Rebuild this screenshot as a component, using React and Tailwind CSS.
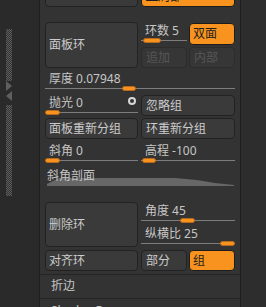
const font = "font-['Noto_Sans','Noto_Sans_CJK_SC',sans-serif]";

function Btn({ children, tone = "normal", className = "" }) {
  const tones = {
    normal: "border-[#222] bg-[#3a3a3a] text-[#cccccc]",
    orange: "border-[#1c1c1c] bg-[#f7931e] text-[#1e1e1e]",
    off: "border-[#2c2c2c] bg-[#363636] text-[#575757]",
  };
  return (
    <div
      className={`flex items-center whitespace-nowrap rounded-[4px] border pl-[3px] text-[12px] leading-[14px] ${tones[tone]} ${className}`}
    >
      {children}
    </div>
  );
}

function Slider({ label, thumb, w = 14, className = "", children }) {
  return (
    <div className={`flex flex-col ${className}`}>
      <div className="flex h-[14px] items-start pl-[4px] text-[12px] leading-[14px] whitespace-nowrap text-[#c6c6c6]">
        <span>{label}</span>
        {children}
      </div>
      <div className="relative h-[5px]">
        <div className="absolute left-0 right-0 top-[2px] h-px bg-[#7d7d7d]" />
        <div
          className="absolute top-0 h-[5px] rounded-full border border-[#b8691a] bg-[#f7931e]"
          style={{ left: thumb, width: w }}
        />
      </div>
    </div>
  );
}

const checker =
  "w-[6px] bg-[repeating-conic-gradient(#5c5c5c_0%_25%,#343434_0%_50%)] bg-[length:2px_2px]";

export default function App() {
  return (
    <div className={`flex h-[307px] w-[266px] overflow-hidden bg-[#2d2d2d] ${font}`}>
      {/* left rail */}
      <div className="flex w-[39px] shrink-0 flex-col bg-[#2a2a2a] pl-[6px]">
        <div className={`mt-[29px] h-[52px] ${checker}`} />
        <svg width="6" height="20" className="block">
          <polygon points="0,0 6,5 0,10" fill="#5f5f5f" />
          <polygon points="6,10 0,15 6,20" fill="#5f5f5f" />
        </svg>
        <div className={`mt-[4px] h-[91px] ${checker}`} />
      </div>

      {/* panel */}
      <div className="flex w-[202px] shrink-0 flex-col border-x border-[#1e1e1e] bg-[#333333]">
        <div className="flex flex-col px-[5px]">
          <div className="mt-[-14px] flex h-[21px] gap-[3px]">
            <Btn className="w-[93px]" />
            <Btn tone="orange" className="w-[94px] pl-[4px]">▬局部</Btn>
          </div>

          {/* 面板环 */}
          <div className="mt-[15px] flex h-[46px] gap-[3px]">
            <Btn className="w-[93px]">面板环</Btn>
            <div className="flex w-[94px] flex-col">
              <div className="flex h-[23px] gap-[2px]">
                <Slider label="环数 5" thumb={2} w={18} className="w-[46px] pt-[2px]" />
                <Btn tone="orange" className="mt-[1px] h-[22px] w-[46px] pl-[3px]">双面</Btn>
              </div>
              <div className="mt-[2px] flex h-[21px] gap-[2px]">
                <Btn tone="off" className="w-[46px] pl-[4px]">追加</Btn>
                <Btn tone="off" className="w-[46px] pl-[4px]">内部</Btn>
              </div>
            </div>
          </div>

          <Slider label="厚度 0.07948" thumb={77} className="pt-[4px]" />

          <div className="mt-[4px] flex h-[21px] gap-[3px]">
            <Slider label="抛光 0" thumb={0} w={15} className="w-[93px] pt-[1px]">
              <span className="mr-[2px] ml-auto mt-[1px] h-[8px] w-[8px] rounded-full border-2 border-[#d8d8d8]" />
            </Slider>
            <Btn className="w-[94px] pl-[4px]">忽略组</Btn>
          </div>

          <div className="mt-[2px] flex h-[21px] gap-[3px]">
            <Btn className="w-[93px]">面板重新分组</Btn>
            <Btn className="w-[94px] pl-[4px]">环重新分组</Btn>
          </div>

          <div className="flex gap-[3px] pt-[5px]">
            <Slider label="斜角 0" thumb={0} w={15} className="w-[93px]" />
            <Slider label="高程 -100" thumb={1} className="w-[94px]" />
          </div>

          {/* 斜角剖面 */}
          <div className="relative mt-[6px] h-[18px]">
            <svg width="187" height="9" className="absolute bottom-[1px] left-[2px]">
              <polygon points="0,9 0,7 4,5 12,1 128,1 150,3 168,6 187,8 187,9" fill="#676767" />
            </svg>
            <div className="relative pl-[2px] text-[12px] leading-[14px] text-[#c6c6c6]">斜角剖面</div>
          </div>

          {/* 删除环 */}
          <div className="mt-[15px] flex h-[45px] gap-[3px]">
            <Btn className="w-[93px]">删除环</Btn>
            <div className="flex w-[94px] flex-col pt-[2px]">
              <Slider label="角度 45" thumb={39} w={15} />
              <Slider label="纵横比 25" thumb={79} w={15} className="mt-[4px]" />
            </div>
          </div>

          <div className="mt-[3px] flex h-[21px] gap-[3px]">
            <Btn className="w-[93px]">对齐环</Btn>
            <div className="flex w-[94px] gap-[2px]">
              <Btn className="w-[46px] pl-[4px]">部分</Btn>
              <Btn tone="orange" className="w-[46px] pl-[3px]">组</Btn>
            </div>
          </div>
        </div>

        <div className="mt-[3px] h-[24px] shrink-0 border-t border-[#252525] pl-[11px] pt-[4px] text-[12px] leading-[14px] text-[#c6c6c6]">
          折边
        </div>
        <div className="h-[24px] shrink-0 border-t border-[#252525] pl-[11px] pt-[5px] text-[12px] leading-[14px] text-[#c6c6c6]">
          ShadowBox
        </div>
      </div>
    </div>
  );
}
